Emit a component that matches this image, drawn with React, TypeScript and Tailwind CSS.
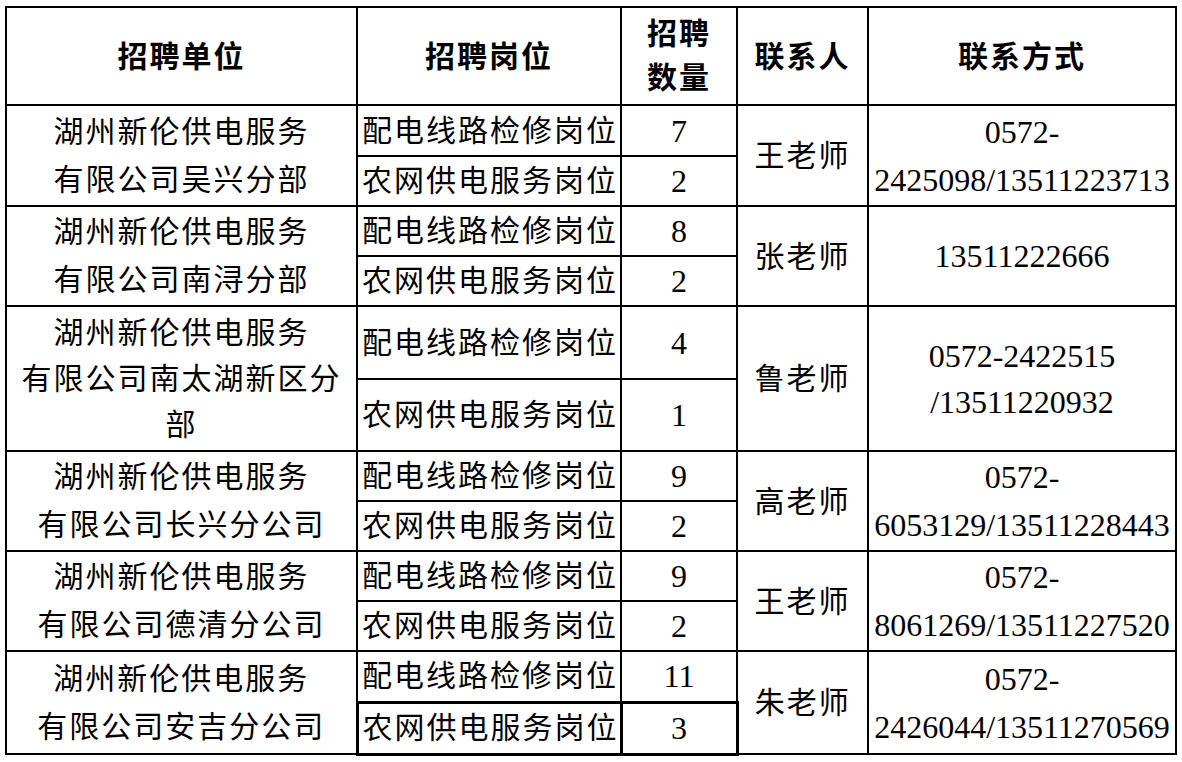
const cjk = "font-['Liberation_Serif','Noto_Sans_CJK_SC',serif]";

type Group = {
  company: string[];
  jobs: { name: string; count: string; h: string }[];
  contact: string;
  phone: string[];
  tight?: boolean;
};

const groups: Group[] = [
  {
    company: ["湖州新伦供电服务", "有限公司吴兴分部"],
    jobs: [
      { name: "配电线路检修岗位", count: "7", h: "h-[51px]" },
      { name: "农网供电服务岗位", count: "2", h: "h-[50px]" },
    ],
    contact: "王老师",
    phone: ["0572-", "2425098/13511223713"],
  },
  {
    company: ["湖州新伦供电服务", "有限公司南浔分部"],
    jobs: [
      { name: "配电线路检修岗位", count: "8", h: "h-[50px]" },
      { name: "农网供电服务岗位", count: "2", h: "h-[50px]" },
    ],
    contact: "张老师",
    phone: ["13511222666"],
  },
  {
    company: ["湖州新伦供电服务", "有限公司南太湖新区分", "部"],
    jobs: [
      { name: "配电线路检修岗位", count: "4", h: "h-[73px]" },
      { name: "农网供电服务岗位", count: "1", h: "h-[72px]" },
    ],
    contact: "鲁老师",
    phone: ["0572-2422515", "/13511220932"],
    tight: true,
  },
  {
    company: ["湖州新伦供电服务", "有限公司长兴分公司"],
    jobs: [
      { name: "配电线路检修岗位", count: "9", h: "h-[50px]" },
      { name: "农网供电服务岗位", count: "2", h: "h-[50px]" },
    ],
    contact: "高老师",
    phone: ["0572-", "6053129/13511228443"],
  },
  {
    company: ["湖州新伦供电服务", "有限公司德清分公司"],
    jobs: [
      { name: "配电线路检修岗位", count: "9", h: "h-[50px]" },
      { name: "农网供电服务岗位", count: "2", h: "h-[50px]" },
    ],
    contact: "王老师",
    phone: ["0572-", "8061269/13511227520"],
  },
  {
    company: ["湖州新伦供电服务", "有限公司安吉分公司"],
    jobs: [
      { name: "配电线路检修岗位", count: "11", h: "h-[51px]" },
      { name: "农网供电服务岗位", count: "3", h: "h-[52px]" },
    ],
    contact: "朱老师",
    phone: ["0572-", "2426044/13511270569"],
  },
];

const cell = "border-2 border-black align-middle p-0";
const zh = "text-[30px] tracking-[2px]";

export default function App() {
  return (
    <div className={`bg-white w-[1182px] h-[762px] pt-[6px] pl-[5px] text-black ${cjk}`}>
      <table className="table-fixed border-collapse w-[1170px]">
        <colgroup>
          <col className="w-[351px]" />
          <col className="w-[264px]" />
          <col className="w-[116px]" />
          <col className="w-[131px]" />
          <col className="w-[308px]" />
        </colgroup>
        <thead>
          <tr className="h-[98px]">
            <th className={`${cell} ${zh} font-bold text-center`}>招聘单位</th>
            <th className={`${cell} ${zh} font-bold text-center`}>招聘岗位</th>
            <th className={`${cell} ${zh} font-bold text-center leading-[44px]`}>
              招聘
              <br />
              数量
            </th>
            <th className={`${cell} ${zh} font-bold text-center`}>联系人</th>
            <th className={`${cell} ${zh} font-bold text-center`}>联系方式</th>
          </tr>
        </thead>
        <tbody>
          {groups.map((g, gi) =>
            g.jobs.map((j, ji) => {
              const last = gi === groups.length - 1 && ji === 1;
              const sel = last ? "border-[3px]" : "";
              return (
                <tr key={`${gi}-${ji}`} className={j.h}>
                  {ji === 0 && (
                    <td
                      rowSpan={2}
                      className={`${cell} ${zh} text-center ${g.tight ? "leading-[46px]" : "leading-[48px]"}`}
                    >
                      {g.company.map((l, i) => (
                        <div key={i}>{l}</div>
                      ))}
                    </td>
                  )}
                  <td className={`${cell} ${sel} ${zh} leading-[40px] pl-[4px] text-left whitespace-nowrap`}>
                    {j.name}
                  </td>
                  <td className={`${cell} ${sel} text-[32px] leading-[40px] text-center`}>{j.count}</td>
                  {ji === 0 && (
                    <>
                      <td rowSpan={2} className={`${cell} ${zh} text-center`}>
                        {g.contact}
                      </td>
                      <td
                        rowSpan={2}
                        className={`${cell} text-[32px] text-center whitespace-nowrap ${g.tight ? "leading-[46px]" : "leading-[48px]"}`}
                      >
                        {g.phone.map((l, i) => (
                          <div key={i}>{l}</div>
                        ))}
                      </td>
                    </>
                  )}
                </tr>
              );
            })
          )}
        </tbody>
      </table>
    </div>
  );
}
